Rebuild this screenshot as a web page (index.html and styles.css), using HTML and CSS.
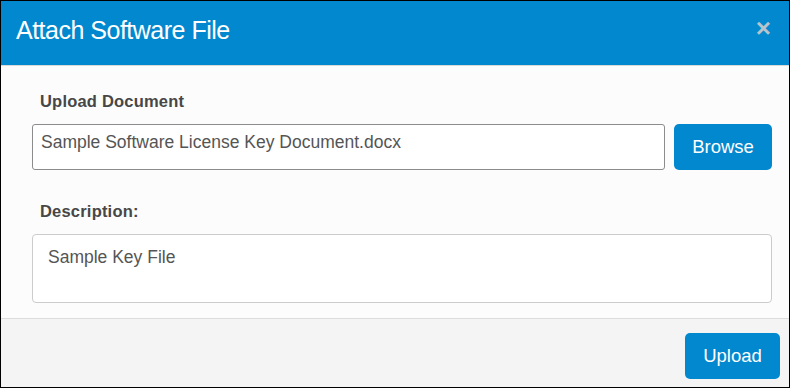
FILE: index.html
```html
<html>
  <head>
    <link rel="stylesheet" href="styles.css">
  </head>
  <body>
    <div class="modal">
      <div class="modal-header">
        <h1>Attach Software File</h1>
        <button class="close-button">&times;</button>
      </div>

      <div class="modal-body">
        <label>Upload Document</label>
        <div class="file-row">
          <div class="file-field">Sample Software License Key Document.docx</div>
          <button class="btn">Browse</button>
        </div>

        <label class="desc-label">Description:</label>
        <div class="textarea">Sample Key File</div>
      </div>

      <div class="modal-footer">
        <button class="btn">Upload</button>
      </div>
    </div>
  </body>
</html>
```

FILE: styles.css
```css
* {
  box-sizing: border-box;
  margin: 0;
  padding: 0;
}

body {
  font-family: 'Liberation Sans', Arial, sans-serif;
  background: #fff;
}

.modal {
  width: 790px;
  height: 388px;
  border: 1px solid #000;
  display: flex;
  flex-direction: column;
  background: #fcfcfc;
}

.modal-header {
  height: 65px;
  background: #0288CE;
  border-bottom: 1px solid #d9d9d9;
  display: flex;
  align-items: center;
  justify-content: space-between;
  padding: 0 18px 6px 15px;
}

h1 {
  font-size: 25px;
  font-weight: normal;
  color: #fff;
  letter-spacing: -0.5px;
}

.close-button {
  background: none;
  border: none;
  color: #b8c4cc;
  font-size: 26px;
  font-weight: bold;
  line-height: 1;
  margin-top: -4px;
  font-family: 'Liberation Sans', Arial, sans-serif;
}

.modal-body {
  flex: 1;
  padding: 26px 17px 0 31px;
}

label {
  display: block;
  font-size: 16.5px;
  font-weight: bold;
  color: #474747;
  letter-spacing: 0.2px;
  margin: 0 0 13px 8px;
}

.file-row {
  display: flex;
  gap: 9px;
}

.file-field {
  flex: 1;
  height: 46px;
  border: 1px solid #8c8c8c;
  border-radius: 3px;
  background: #fff;
  padding: 7px 8px;
  font-size: 17.5px;
  color: #555;
}

.btn {
  background: #0288CE;
  color: #fff;
  border: none;
  border-radius: 5px;
  font-size: 18.5px;
  font-family: 'Liberation Sans', Arial, sans-serif;
  height: 46px;
  width: 98px;
}

.desc-label {
  margin-top: 32px;
  margin-bottom: 13px;
}

.textarea {
  height: 69px;
  border: 1px solid #ccc;
  border-radius: 4px;
  background: #fff;
  padding: 12px 15px;
  font-size: 17.5px;
  color: #555;
}

.modal-footer {
  height: 69px;
  background: #f4f4f4;
  border-top: 1px solid #ddd;
  display: flex;
  align-items: flex-start;
  justify-content: flex-end;
  padding: 14px 9px 0 0;
}

.modal-footer .btn {
  width: 95px;
}
```
